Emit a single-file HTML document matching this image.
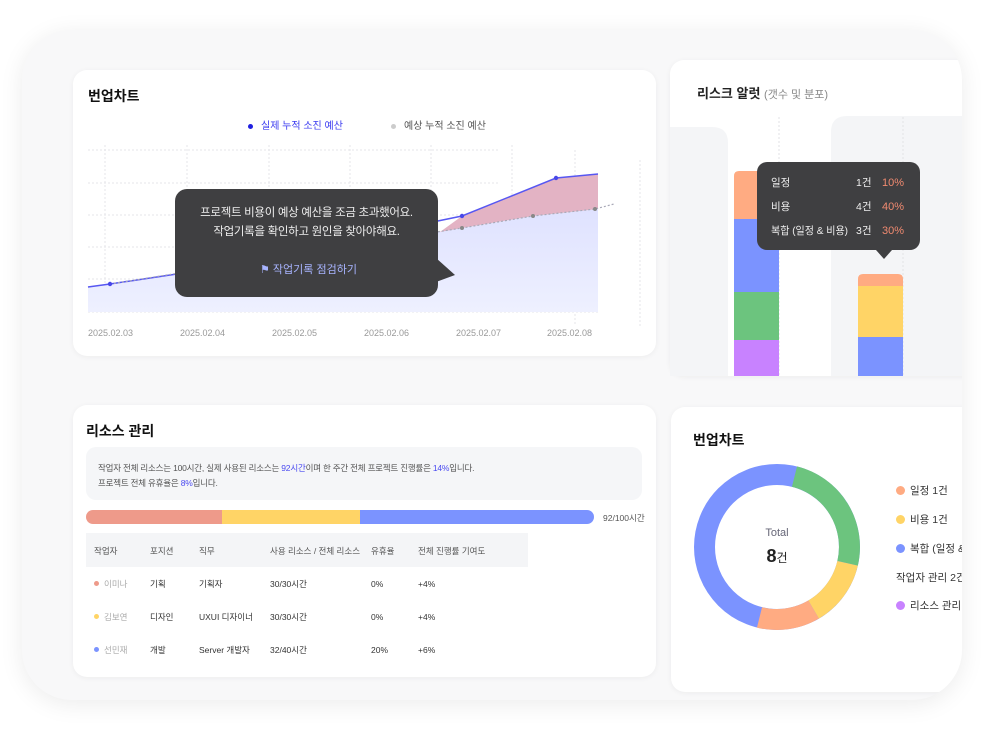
<!DOCTYPE html>
<html><head><meta charset="utf-8"><style>
*{margin:0;padding:0;box-sizing:border-box}
body{width:1000px;height:730px;background:#fff;font-family:"Liberation Sans","Noto Sans CJK KR",sans-serif;position:relative;overflow:hidden;color:#222}
.frame{position:absolute;left:22px;top:30px;width:940px;height:670px;border-radius:50px;background:#f8f8f9;box-shadow:0 4px 24px rgba(0,0,0,.08);overflow:hidden}
.card{position:absolute;background:#fff;border-radius:14px;box-shadow:0 1px 6px rgba(0,0,0,.05)}
.abs{position:absolute}
h3{font-size:14px;font-weight:bold;color:#111;position:absolute}
.sm{font-size:9px;color:#555}
.dot{display:inline-block;width:9px;height:9px;border-radius:50%;vertical-align:-1px;margin-right:5px}
.rd{display:inline-block;width:5px;height:5px;border-radius:50%;vertical-align:1px;margin-right:5px}
</style></head><body>
<div class="frame">
 <div class="card" style="left:51px;top:40px;width:583px;height:286px"></div>
 <div class="card" style="left:648px;top:30px;width:320px;height:316px"></div>
 <div class="card" style="left:51px;top:375px;width:583px;height:272px"></div>
 <div class="card" style="left:649px;top:377px;width:320px;height:285px"></div>
</div>

<h3 style="left:88px;top:86px">번업차트</h3>
<div class="abs" style="left:248px;top:117px;font-size:10px;color:#3a3af0"><span style="display:inline-block;width:5px;height:5px;border-radius:50%;background:#2020e0;margin-right:8px;vertical-align:middle"></span>실제 누적 소진 예산</div>
<div class="abs" style="left:391px;top:117px;font-size:10px;color:#555"><span style="display:inline-block;width:5px;height:5px;border-radius:50%;background:#ccc;margin-right:8px;vertical-align:middle"></span>예상 누적 소진 예산</div>

<svg class="abs" style="left:0;top:0" width="1000" height="730">
 <g stroke="#e6e6ea" stroke-dasharray="2,2" stroke-width="1">
  <line x1="88" y1="150" x2="500" y2="150"/><line x1="88" y1="183" x2="500" y2="183"/><line x1="88" y1="215" x2="500" y2="215"/><line x1="88" y1="247" x2="500" y2="247"/><line x1="88" y1="279" x2="500" y2="279"/><line x1="88" y1="312" x2="600" y2="312"/>
  <line x1="105" y1="145" x2="105" y2="312"/><line x1="187" y1="145" x2="187" y2="312"/><line x1="269" y1="145" x2="269" y2="312"/><line x1="350" y1="145" x2="350" y2="312"/><line x1="431" y1="145" x2="431" y2="312"/><line x1="512" y1="145" x2="512" y2="312"/><line x1="575" y1="150" x2="575" y2="326"/><line x1="640" y1="160" x2="640" y2="328"/>
 </g>
 <defs><linearGradient id="g1" x1="0" y1="0" x2="0" y2="1"><stop offset="0" stop-color="#dfe2ff"/><stop offset="1" stop-color="#eef0ff"/></linearGradient></defs>
 <path d="M88 287 L110 284 L462 228 L533 216 L598 209 L598 312 L88 312Z" fill="url(#g1)"/>
 <path d="M440 232 L462 216 L556 178 L598 174 L598 209 L533 216 L462 228Z" fill="#e3b3c4"/>
 <polyline points="88,287 110,284 190,272 462,216 556,178 598,174" fill="none" stroke="#5757f2" stroke-width="1.5"/>
 <polyline points="110,284 462,228 533,216 595,209 614,204" fill="none" stroke="#a9a9b8" stroke-width="1.2" stroke-dasharray="2,2"/>
 <circle cx="110" cy="284" r="2.2" fill="#4848e8"/><circle cx="462" cy="216" r="2.2" fill="#4848e8"/><circle cx="556" cy="178" r="2.2" fill="#4848e8"/>
 <circle cx="462" cy="228" r="2" fill="#888"/><circle cx="533" cy="216" r="2" fill="#888"/><circle cx="595" cy="209" r="2" fill="#888"/>
 <rect x="175" y="189" width="263" height="108" rx="12" fill="#3f3f41"/>
 <path d="M436 258 L455 275 L436 282Z" fill="#3f3f41"/>
 <g font-size="9" fill="#999"><text x="88" y="336">2025.02.03</text><text x="180" y="336">2025.02.04</text><text x="272" y="336">2025.02.05</text><text x="364" y="336">2025.02.06</text><text x="456" y="336">2025.02.07</text><text x="547" y="336">2025.02.08</text></g>

 <path d="M670 127 L712 127 Q728 127 728 143 L728 376 L670 376Z" fill="#f4f5f7"/>
 <path d="M847 116 L962 116 L962 376 L831 376 L831 132 Q831 116 847 116Z" fill="#f4f5f7"/>
 <line x1="779" y1="117" x2="779" y2="376" stroke="#e2e2e6" stroke-dasharray="2,2"/>
 <line x1="903" y1="117" x2="903" y2="376" stroke="#e2e2e6" stroke-dasharray="2,2"/>
 <path d="M734 176 Q734 171 739 171 L774 171 Q779 171 779 176 L779 219 L734 219Z" fill="#ffab82"/>
 <rect x="734" y="219" width="45" height="73" fill="#7b93ff"/><rect x="734" y="292" width="45" height="48" fill="#6cc47e"/><rect x="734" y="340" width="45" height="36" fill="#c882ff"/>
 <path d="M858 279 Q858 274 863 274 L898 274 Q903 274 903 279 L903 286 L858 286Z" fill="#ffab82"/>
 <rect x="858" y="286" width="45" height="51" fill="#ffd466"/><rect x="858" y="337" width="45" height="39" fill="#7b93ff"/>
 <rect x="757" y="162" width="163" height="88" rx="10" fill="#3f3f41"/>
 <path d="M876 250 L884 259 L892 250Z" fill="#3f3f41"/>
 <g font-size="10.5" fill="#eee"><text x="771" y="186">일정</text><text x="771" y="210">비용</text><text x="771" y="234" textLength="77" lengthAdjust="spacingAndGlyphs">복합 (일정 &amp; 비용)</text>
 <text x="856" y="186">1건</text><text x="856" y="210">4건</text><text x="856" y="234">3건</text></g>
 <g font-size="11" fill="#f08a70"><text x="882" y="186">10%</text><text x="882" y="210">40%</text><text x="882" y="234">30%</text></g>
</svg>
<svg class="abs" style="left:0;top:0" width="1000" height="730" viewBox="0 0 1000 730">
 <g transform="translate(777,547)" fill="none" stroke-width="21">
  <circle r="72.5" stroke="#7b93ff"/>
  <path d="M17.5 -70.4 A72.5 72.5 0 0 1 70.6 16.3" stroke="#6cc47e"/>
  <path d="M70.6 16.3 A72.5 72.5 0 0 1 36.6 62.6" stroke="#ffd466"/>
  <path d="M36.6 62.6 A72.5 72.5 0 0 1 -17.5 70.4" stroke="#ffab82"/>
 </g>
</svg>

<div class="abs" style="left:697px;top:83px;font-size:13px;font-weight:bold;color:#222">리스크 알럿 <span style="font-weight:normal;font-size:11px;color:#888">(갯수 및 분포)</span></div>

<div class="abs" style="left:175px;top:204px;width:263px;text-align:center;font-size:11.5px;color:#eee;line-height:19px;letter-spacing:-0.3px">프로젝트 비용이 예상 예산을 조금 초과했어요.<br>작업기록을 확인하고 원인을 찾아야해요.</div>
<div class="abs" style="left:260px;top:261px;font-size:11px;color:#a8b4ff">⚑ 작업기록 점검하기</div>

<h3 style="left:86px;top:421px">리소스 관리</h3>
<div class="abs" style="left:86px;top:447px;width:556px;height:53px;background:#f5f6f8;border-radius:10px"></div>
<div class="abs sm" style="left:98px;top:461px;line-height:15px;font-size:8.5px;letter-spacing:-0.2px">작업자 전체 리소스는 100시간, 실제 사용된 리소스는 <span style="color:#4a4af0">92시간</span>이며 한 주간 전체 프로젝트 진행률은 <span style="color:#4a4af0">14%</span>입니다.<br>프로젝트 전체 유휴율은 <span style="color:#4a4af0">8%</span>입니다.</div>
<div class="abs" style="left:86px;top:510px;width:508px;height:14px;border-radius:7px;overflow:hidden;display:flex">
 <div style="width:136px;background:#ee9a8a"></div><div style="width:138px;background:#ffd466"></div><div style="flex:1;background:#7b93ff"></div></div>
<div class="abs sm" style="left:603px;top:512px;font-size:8.5px">92/100시간</div>
<div class="abs" style="left:86px;top:533px;width:442px;height:34px;background:#f4f5f7"></div>
<div class="abs sm" style="top:545px;left:94px;font-size:8.5px">작업자</div>
<div class="abs sm" style="top:545px;left:150px;font-size:8.5px">포지션</div>
<div class="abs sm" style="top:545px;left:199px;font-size:8.5px">직무</div>
<div class="abs sm" style="top:545px;left:270px;font-size:8.5px">사용 리소스 / 전체 리소스</div>
<div class="abs sm" style="top:545px;left:371px;font-size:8.5px">유휴율</div>
<div class="abs sm" style="top:545px;left:418px;font-size:8.5px">전체 진행률 기여도</div>
<div class="abs" style="left:94px;top:578px;font-size:8.5px;color:#333;line-height:12px">
 <div class="abs" style="top:0;left:0;white-space:nowrap"><span class="rd" style="background:#ee9a8a"></span><span style="color:#aaa">이미나</span></div>
 <div class="abs" style="top:0;left:56px;white-space:nowrap">기획</div><div class="abs" style="top:0;left:105px;white-space:nowrap">기획자</div><div class="abs" style="top:0;left:176px;white-space:nowrap">30/30시간</div><div class="abs" style="top:0;left:277px">0%</div><div class="abs" style="top:0;left:324px">+4%</div>
 <div class="abs" style="top:33px;left:0;white-space:nowrap"><span class="rd" style="background:#ffd466"></span><span style="color:#aaa">김보연</span></div>
 <div class="abs" style="top:33px;left:56px;white-space:nowrap">디자인</div><div class="abs" style="top:33px;left:105px;white-space:nowrap">UXUI 디자이너</div><div class="abs" style="top:33px;left:176px;white-space:nowrap">30/30시간</div><div class="abs" style="top:33px;left:277px">0%</div><div class="abs" style="top:33px;left:324px">+4%</div>
 <div class="abs" style="top:66px;left:0;white-space:nowrap"><span class="rd" style="background:#7b93ff"></span><span style="color:#aaa">선민재</span></div>
 <div class="abs" style="top:66px;left:56px;white-space:nowrap">개발</div><div class="abs" style="top:66px;left:105px;white-space:nowrap">Server 개발자</div><div class="abs" style="top:66px;left:176px;white-space:nowrap">32/40시간</div><div class="abs" style="top:66px;left:277px">20%</div><div class="abs" style="top:66px;left:324px">+6%</div>
</div>

<h3 style="left:693px;top:430px">번업차트</h3>
<div class="abs" style="left:737px;top:527px;width:80px;text-align:center;font-size:11px;color:#667">Total</div>
<div class="abs" style="left:737px;top:546px;width:80px;text-align:center;font-size:18px;font-weight:bold;color:#222">8<span style="font-size:12px;font-weight:normal">건</span></div>
<div class="abs" style="left:896px;top:483px;width:66px;overflow:hidden;font-size:10.5px;color:#333;white-space:nowrap;height:130px">
 <div class="abs" style="top:0"><span class="dot" style="background:#ffab82"></span>일정 1건</div>
 <div class="abs" style="top:29px"><span class="dot" style="background:#ffd466"></span>비용 1건</div>
 <div class="abs" style="top:58px"><span class="dot" style="background:#7b93ff"></span>복합 (일정 &amp; 비용)</div>
 <div class="abs" style="top:87px">작업자 관리 2건</div>
 <div class="abs" style="top:115px"><span class="dot" style="background:#c882ff"></span>리소스 관리 0건</div>
</div>
</body></html>
